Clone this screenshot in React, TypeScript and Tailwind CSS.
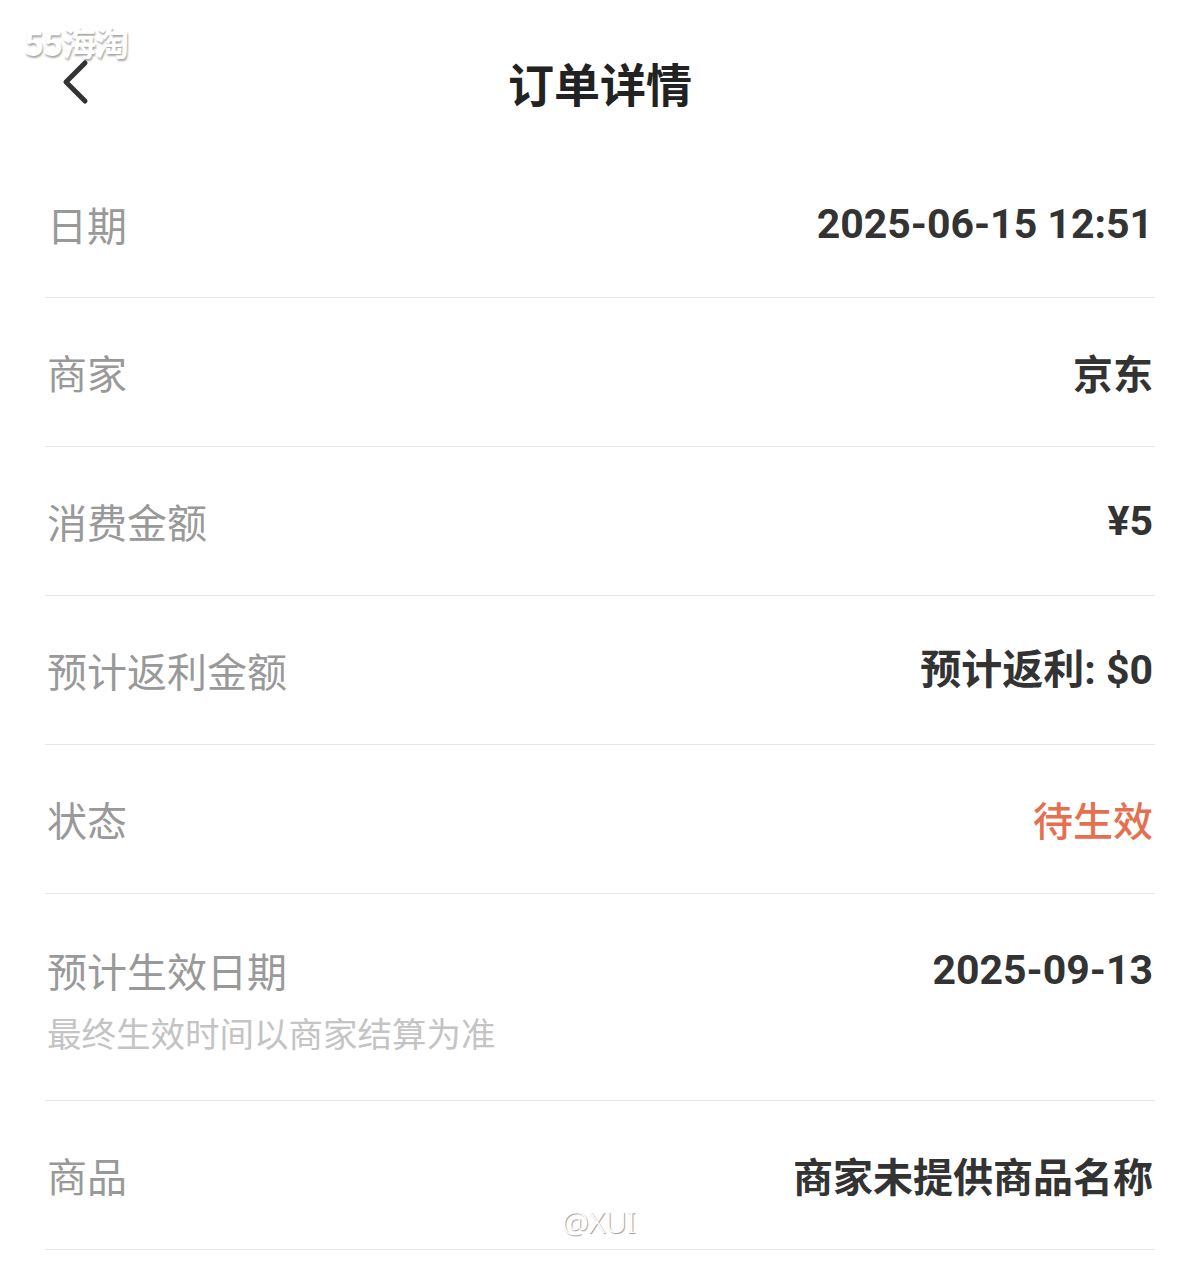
import React from "react";

const cjk = '"Noto Sans CJK SC", "Noto Sans", sans-serif';
const num = 'Roboto, "Noto Sans CJK SC", sans-serif';

type Row = { label: string; value: string; color?: string; sub?: string; numeric?: boolean };

const rows: Row[] = [
  { label: "日期", value: "2025-06-15 12:51", numeric: true },
  { label: "商家", value: "京东" },
  { label: "消费金额", value: "¥5", numeric: true },
  { label: "预计返利金额", value: "预计返利: $0", numeric: true },
  { label: "状态", value: "待生效", color: "text-[#e5704f]" },
  { label: "预计生效日期", value: "2025-09-13", numeric: true, sub: "最终生效时间以商家结算为准" },
  { label: "商品", value: "商家未提供商品名称" },
];

function Value({ r }: { r: Row }) {
  if (r.color) {
    return <span className={`text-[40px] leading-[48px] font-medium pr-[2px] ${r.color}`}>{r.value}</span>;
  }
  if (r.numeric) {
    return (
      <span className="text-[41px] leading-[48px] font-bold text-[#333333] pr-[2px]" style={{ fontFamily: num }}>
        {r.value}
      </span>
    );
  }
  return <span className="text-[40px] leading-[48px] font-bold text-[#333333] pr-[2px]">{r.value}</span>;
}

export default function App() {
  return (
    <div className="relative w-[1200px] h-[1271px] bg-white overflow-hidden" style={{ fontFamily: cjk }}>
      <header className="relative h-[150px] flex items-start justify-center pt-[54px]">
        <button className="absolute left-[58px] top-[56px] w-[34px] h-[52px] flex items-center justify-center">
          <svg width="30" height="48" viewBox="0 0 30 48" fill="none">
            <path d="M25 5 L6 24 L25 43" stroke="#333333" strokeWidth="5" strokeLinecap="round" strokeLinejoin="round" />
          </svg>
        </button>
        <h1 className="text-[46px] leading-[56px] font-bold text-[#222222]">订单详情</h1>
      </header>
      <div className="px-[45px]">
        {rows.map((r, i) =>
          r.sub ? (
            <div key={r.label} className="h-[207px] border-b border-[#e8e8e8] flex items-start justify-between pt-[52px]">
              <div className="flex flex-col">
                <span className="text-[40px] leading-[48px] text-[#999999] pl-[2px]">{r.label}</span>
                <span className="mt-[18px] text-[34.5px] leading-[40px] text-[#c4c4c4] pl-[2px]">{r.sub}</span>
              </div>
              <Value r={r} />
            </div>
          ) : (
            <div
              key={r.label}
              className={`${i === 0 ? "h-[148px]" : "h-[149px]"} border-b border-[#e8e8e8] flex items-center justify-between`}
            >
              <span className="text-[40px] leading-[48px] text-[#999999] pl-[2px]">{r.label}</span>
              <Value r={r} />
            </div>
          )
        )}
      </div>
      <div
        className="absolute left-[24px] top-[22px] text-[34px] leading-[40px] font-bold text-white tracking-[-1px]"
        style={{ fontFamily: '"Noto Sans CJK SC", sans-serif', textShadow: "1px 2px 2px rgba(0,0,0,0.35)" }}
      >
        55海淘
      </div>
      <div
        className="absolute left-[562px] top-[1202px] text-[30px] leading-[40px] font-light text-white"
        style={{ fontFamily: '"Noto Sans", sans-serif', textShadow: "1px 1px 1px rgba(0,0,0,0.4)" }}
      >
        @XUI
      </div>
    </div>
  );
}
